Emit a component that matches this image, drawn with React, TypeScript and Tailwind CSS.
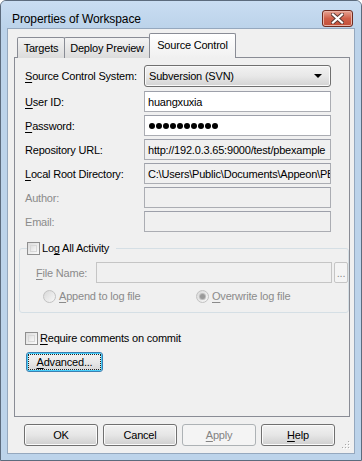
import React from 'react';

const Acc: React.FC<{ c: string }> = ({ c }) => (
    <span className="underline underline-offset-[2px]">{c}</span>
);

const CheckBox: React.FC = () => (
    <span className="inline-block w-[13px] h-[13px] border border-[#8f8f8f] bg-gradient-to-br from-[#dcdcdc] to-[#fbfbfb] p-[2px] shrink-0">
        <span className="block w-full h-full bg-gradient-to-br from-[#e0e0e0] to-[#f7f7f7] border border-[#d8d8d8]" />
    </span>
);

const Radio: React.FC<{ checked?: boolean }> = ({ checked }) => (
    <span className="inline-flex items-center justify-center w-[13px] h-[13px] rounded-full border border-[#c2c2c2] bg-gradient-to-br from-[#d9d9d9] to-[#f8f8f8] shrink-0">
        {checked && <span className="block w-[5px] h-[5px] rounded-full bg-[#9a9a9a] ring-1 ring-[#bdbdbd]" />}
    </span>
);

const Field: React.FC<{ label: React.ReactNode; disabled?: boolean; children?: React.ReactNode; bg?: string }> = ({ label, disabled, children, bg }) => (
    <div className="flex items-center h-[21px]">
        <div className={`w-[119px] whitespace-nowrap ${disabled ? 'text-[#8b8b8b]' : 'text-black'}`}>{label}</div>
        <div className={`flex-1 min-w-0 h-full border border-[#abadb3] border-t-[#9da0aa] ${bg ?? 'bg-white'} pl-[3px] flex items-center overflow-hidden whitespace-nowrap`}>
            {children}
        </div>
    </div>
);

const WinButton: React.FC<{ children: React.ReactNode; disabled?: boolean }> = ({ children, disabled }) => (
    <div
        className={
            disabled
                ? 'w-[74px] h-[22px] rounded-[3px] border border-[#adb2b5] bg-[#f4f4f4] text-[#838383] flex items-center justify-center'
                : 'w-[74px] h-[22px] rounded-[3px] border border-[#707070] bg-gradient-to-b from-[#f2f2f2] via-[#e6e6e6] to-[#cfcfcf] text-black flex items-center justify-center shadow-[inset_0_0_0_1px_#fbfbfb]'
        }
    >
        {children}
    </div>
);

const App: React.FC = () => {
    return (
        <div className="w-[362px] h-[461px] bg-[#bcd3ea] border border-[#5c6b7d] rounded-t-[6px] flex flex-col font-['Liberation_Sans',Arial,sans-serif] text-[11px] tracking-[-0.2px] leading-[16px] text-black overflow-hidden select-none">
            {/* title bar */}
            <div className="h-[27px] flex items-start justify-between pl-[11px] pr-[8px] bg-gradient-to-b from-[#c9ddf2] to-[#bcd3ea]">
                <span className="mt-[10px] text-[12px] tracking-[-0.1px] text-black">Properties of Workspace</span>
                <div className="mt-[9px] w-[31px] h-[17px] rounded-[3px] border border-[#6e2b20] bg-gradient-to-b from-[#e6a495] via-[#cf5f49] to-[#c24f38] flex items-center justify-center shadow-[inset_0_0_0_1px_#eab3a6]">
                    <svg width="13" height="11" viewBox="0 0 13 11">
                        <path d="M2 1.5 L11 9.5 M11 1.5 L2 9.5" stroke="#5b3a35" strokeWidth="4" strokeLinecap="square" />
                        <path d="M2 1.5 L11 9.5 M11 1.5 L2 9.5" stroke="#ffffff" strokeWidth="2.2" strokeLinecap="square" />
                    </svg>
                </div>
            </div>

            {/* client area */}
            <div className="flex-1 mx-[6px] mb-[6px] bg-[#f0f0f0] border border-[#95a8be] flex flex-col pl-[6px] pr-[4px] pt-[4px] relative">
                {/* tabs */}
                <div className="relative z-10 flex items-end h-[25px] pl-[3px]">
                    <div className="w-[48px] h-[21px] border border-b-0 border-[#898c95] rounded-t-[2px] bg-gradient-to-b from-[#f3f3f3] to-[#dcdcdc] flex items-center justify-center">Targets</div>
                    <div className="w-[86px] h-[21px] -ml-px border border-b-0 border-[#898c95] rounded-t-[2px] bg-gradient-to-b from-[#f3f3f3] to-[#dcdcdc] flex items-center justify-center">Deploy Preview</div>
                    <div className="w-[87px] h-[25px] -ml-px border border-b-0 border-[#898c95] rounded-t-[2px] bg-gradient-to-b from-white to-[#f0f0f0] flex items-start justify-center pt-[3px]">Source Control</div>
                </div>

                {/* panel */}
                <div className="-mt-px h-[360px] border border-[#898c95] bg-[#f0f0f0] pl-[10px] pr-[18px] pt-[7px] flex flex-col">
                    <div className="flex items-center h-[22px]">
                        <div className="w-[119px] whitespace-nowrap"><Acc c="S" />ource Control System:</div>
                        <div className="flex-1 h-full rounded-[3px] border border-[#707070] bg-gradient-to-b from-[#f2f2f2] via-[#e8e8e8] to-[#d3d3d3] shadow-[inset_0_0_0_1px_#fafafa] flex items-center justify-between pl-[4px] pr-[8px]">
                            <span>Subversion (SVN)</span>
                            <svg width="8" height="4" viewBox="0 0 8 4"><path d="M0 0 H8 L4 4 Z" fill="#000" /></svg>
                        </div>
                    </div>
                    <div className="flex flex-col gap-[3px] mt-[4px]">
                        <Field label={<><Acc c="U" />ser ID:</>}>huangxuxia</Field>
                        <Field label={<><Acc c="P" />assword:</>}>
                            <span className="flex gap-[1px] pl-[1px]">
                                {Array.from({ length: 10 }).map((_, i) => (
                                    <span key={i} className="block w-[6px] h-[6px] rounded-full bg-black" />
                                ))}
                            </span>
                        </Field>
                        <Field label="Repository URL:" bg="bg-[#f0f0f0]">http://192.0.3.65:9000/test/pbexample</Field>
                        <Field label={<><Acc c="L" />ocal Root Directory:</>} bg="bg-[#f0f0f0]">C:\Users\Public\Documents\Appeon\PB</Field>
                        <Field label="Author:" disabled bg="bg-[#f0f0f0]" />
                        <Field label="Email:" disabled bg="bg-[#f0f0f0]" />
                    </div>

                    {/* log group */}
                    <fieldset className="mt-[8px] -ml-[6px] w-[329px] border border-[#d5dfe5] rounded-[3px] pl-[16px] pr-0 pt-[6px] pb-[8px]">
                        <legend className="-ml-[9px] pr-[7px]">
                            <span className="flex items-center gap-[2px]">
                                <CheckBox />
                                <span>Lo<Acc c="g" /> All Activity</span>
                            </span>
                        </legend>
                        <div className="flex items-center h-[21px]">
                            <div className="w-[60px] text-[#8b8b8b] whitespace-nowrap"><Acc c="F" />ile Name:</div>
                            <div className="w-[236px] h-full border border-[#c5c5c5] bg-[#f0f0f0]" />
                            <div className="ml-[2px] w-[14px] h-full border border-[#c5c5c5] rounded-[2px] bg-[#f4f4f4] flex items-end justify-center pb-[3px] text-[#8b8b8b] leading-none">...</div>
                        </div>
                        <div className="flex items-center h-[16px] mt-[5px] pl-[7px] text-[#8b8b8b]">
                            <div className="flex items-center gap-[3px] w-[153px]">
                                <Radio />
                                <span><Acc c="A" />ppend to log file</span>
                            </div>
                            <div className="flex items-center gap-[3px]">
                                <Radio checked />
                                <span><Acc c="O" />verwrite log file</span>
                            </div>
                        </div>
                    </fieldset>

                    <div className="flex items-center gap-[2px] mt-[17px]">
                        <CheckBox />
                        <span><Acc c="R" />equire comments on commit</span>
                    </div>
                    <div className="mt-[6px] ml-[1px] w-[77px] h-[20px] rounded-[3px] border border-[#3c7fb1] bg-gradient-to-b from-[#f2f2f2] via-[#e8e8e8] to-[#d6d6d6] shadow-[inset_0_0_0_1px_#48d0fb] p-[2px]">
                        <div className="w-full h-full outline-1 outline-dotted outline-[#222] flex items-center justify-center">
                            <span><Acc c="A" />dvanced...</span>
                        </div>
                    </div>
                </div>

                {/* buttons */}
                <div className="flex gap-[5px] mt-[7px] pl-[10px]">
                    <WinButton>OK</WinButton>
                    <WinButton>Cancel</WinButton>
                    <WinButton disabled><Acc c="A" />pply</WinButton>
                    <WinButton><Acc c="H" />elp</WinButton>
                </div>

                {/* size grip */}
                <svg className="absolute right-[3px] bottom-[3px]" width="10" height="10" viewBox="0 0 10 10">
                    {[[8, 2], [8, 5], [5, 5], [8, 8], [5, 8], [2, 8]].map(([x, y], i) => (
                        <g key={i}>
                            <rect x={x} y={y} width="1" height="1" fill="#ffffff" />
                            <rect x={x - 1} y={y - 1} width="1" height="1" fill="#a8a8a8" />
                        </g>
                    ))}
                </svg>
            </div>
        </div>
    );
};

export default App;
